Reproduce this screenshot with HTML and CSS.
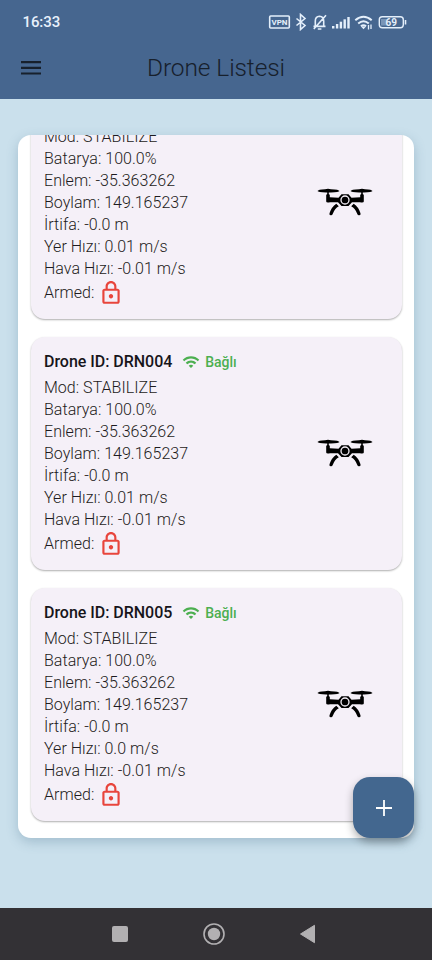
FILE: index.html
```html
<!DOCTYPE html>
<html lang="tr">
<head>
<meta charset="utf-8">
<meta name="viewport" content="width=device-width">
<title>Drone Listesi</title>
<link rel="stylesheet" href="styles.css">
</head>
<body>
<svg width="0" height="0" class="defs">
  <symbol id="lock" viewBox="0 0 24 24"><path d="M18 8h-1V6c0-2.760-2.240-5-5-5S7 3.240 7 6v2H6c-1.100 0-2 .9-2 2v10c0 1.100.9 2 2 2h12c1.100 0 2-.9 2-2V10c0-1.100-.9-2-2-2zM9 6c0-1.660 1.340-3 3-3s3 1.340 3 3v2H9V6zm9 14H6V10h12v10zm-6-3c1.100 0 2-.9 2-2s-.9-2-2-2-2 .9-2 2 .9 2 2 2z"/></symbol>
  <symbol id="wifi" viewBox="0 0 24 24"><path d="M1 9l2 2c4.970-4.970 13.030-4.970 18 0l2-2C16.930 2.930 7.080 2.930 1 9zm8 8l3 3 3-3c-1.650-1.660-4.340-1.660-6 0zm-4-4l2 2c2.760-2.760 7.240-2.760 10 0l2-2C15.140 9.140 8.870 9.140 5 13z"/></symbol>
  <symbol id="drone" viewBox="0 0 56 28">
    <path d="M0.500 3Q1 1.500 8 1.200L11 .8 14 1.200Q22 1.500 22.500 3Q22 4.400 14 4.400H9Q1 4.400.500 3zM33.500 3Q34 1.500 42 1.200L45 .8 48 1.200Q55 1.500 55.500 3Q55 4.400 47 4.400H42Q34 4.400 33.500 3z"/>
    <path d="M9.200 6.800Q11 5.300 12.800 6.800V9.200L21.500 9.700 24.500 6.200H31.500L34.500 9.700 43.200 9.200V6.800Q45 5.300 46.800 6.800V13.500Q46.800 14.800 43 14.200L35 14.200 31.500 18H24.500L21 14.200 13 14.200Q9.200 14.800 9.200 13.500z"/>
    <path d="M10.200 3h1.600v5h-1.600zM44.200 3h1.600v5h-1.600z"/>
    <circle cx="28" cy="12" r="4" fill="none" stroke="#f5f0f8" stroke-width="1.300"/>
    <path d="M19.300 15.800L21.800 18.300Q17.700 20.500 15.700 26Q15.200 27.600 13.600 27.300Q12 27 12.500 25.200Q14.500 19 19.300 15.800zM36.700 15.800L34.200 18.300Q38.300 20.500 40.300 26Q40.800 27.600 42.400 27.300Q44 27 43.500 25.200Q41.500 19 36.700 15.800z"/>
  </symbol>
</svg>
<div class="screen">
  <header class="header">
    <div class="status">
      <span class="time">16:33</span>
      <svg class="status-icons" width="140" height="18" viewBox="0 0 140 18" fill="none" stroke="#e4effb" stroke-width="1.600">
        <rect x="1.700" y="3" width="19.600" height="12" rx="1"/>
        <text x="11.500" y="12" class="vpn">VPN</text>
        <path d="M28.500 5.500l8.500 7-4.500 4v-15l4.500 4-8.500 7"/>
        <path d="M45.500 13.400h12M47.300 12.500V8q0-4.300 4.200-4.700 4.200.4 4.200 4.700v5M45.800 16L58 2.300M49.800 16h3.600"/>
        <g fill="#e4effb" stroke="none"><rect x="64" y="13" width="2.400" height="2.500"/><rect x="67.900" y="11" width="2.400" height="4.500"/><rect x="71.700" y="8.700" width="2.400" height="6.800"/><rect x="75.500" y="6.300" width="2.400" height="9.200"/><rect x="79.300" y="4" width="2.400" height="11.500"/></g>
        <path stroke-width="2" d="M87.300 7.300q8.200-7 16.400 0M90.200 10.500q5.300-4.500 10.600 0M92.900 13.300q2.600-2 5.200 0"/>
        <path fill="#e4effb" stroke="none" d="M93 13.500h5L95.500 16.200z"/>
        <path stroke-width="1.300" d="M100.500 12v4.500M103 11.500v4.500"/>
        <rect x="113" y="6" width="6" height="6.500" fill="#7995b7" stroke="none"/>
        <rect x="111.300" y="3.700" width="24" height="11" rx="3" stroke-width="1.400"/>
        <path d="M137.500 7v4.500" stroke-width="1.600"/>
        <text x="123.300" y="12.800" class="level">69</text>
      </svg>
    </div>
    <div class="appbar">
      <svg class="menu" width="20" height="14" viewBox="0 0 20 14" fill="#17202c"><path d="M0 0h20v2.200H0zM0 5.700h20v2.200H0zM0 11.400h20v2.200H0z"/></svg>
      <h1>Drone Listesi</h1>
    </div>
  </header>
  <main class="content">
    <section class="panel">
      <article class="card">
        <div class="info">
          <p>Mod: STABILIZE</p><p>Batarya: 100.0%</p><p>Enlem: -35.363262</p><p>Boylam: 149.165237</p><p>İrtifa: -0.0 m</p><p>Yer Hızı: 0.01 m/s</p><p>Hava Hızı: -0.01 m/s</p>
          <p class="armed">Armed: <svg class="lock"><use href="#lock"/></svg></p>
        </div>
        <svg class="drone"><use href="#drone"/></svg>
      </article>
      <article class="card">
        <div class="info">
          <h2>Drone ID: DRN004 <svg class="wifi"><use href="#wifi"/></svg><span class="state">Bağlı</span></h2>
          <p>Mod: STABILIZE</p><p>Batarya: 100.0%</p><p>Enlem: -35.363262</p><p>Boylam: 149.165237</p><p>İrtifa: -0.0 m</p><p>Yer Hızı: 0.01 m/s</p><p>Hava Hızı: -0.01 m/s</p>
          <p class="armed">Armed: <svg class="lock"><use href="#lock"/></svg></p>
        </div>
        <svg class="drone"><use href="#drone"/></svg>
      </article>
      <article class="card">
        <div class="info">
          <h2>Drone ID: DRN005 <svg class="wifi"><use href="#wifi"/></svg><span class="state">Bağlı</span></h2>
          <p>Mod: STABILIZE</p><p>Batarya: 100.0%</p><p>Enlem: -35.363262</p><p>Boylam: 149.165237</p><p>İrtifa: -0.0 m</p><p>Yer Hızı: 0.0 m/s</p><p>Hava Hızı: -0.01 m/s</p>
          <p class="armed">Armed: <svg class="lock"><use href="#lock"/></svg></p>
        </div>
        <svg class="drone"><use href="#drone"/></svg>
      </article>
    </section>
    <button class="fab" aria-label="Ekle"><svg width="16" height="16" viewBox="0 0 16 16" fill="#fff"><path d="M7.100 0h1.800v7.100H16v1.800H8.900V16H7.100V8.900H0V7.100h7.100z"/></svg></button>
  </main>
  <nav class="navbar">
    <svg width="432" height="52" viewBox="0 0 432 52" fill="#b2b0b2"><rect x="112" y="18" width="16" height="16" rx="2"/><circle cx="214" cy="26" r="6.200"/><circle cx="214" cy="26" r="10" fill="none" stroke="#b2b0b2" stroke-width="1.600"/><path d="M300.500 26L314.500 17.300V34.700z" stroke="#b2b0b2" stroke-linejoin="round"/></svg>
  </nav>
</div>
</body>
</html>
```

FILE: styles.css
```css
* { box-sizing: border-box; }
body { margin: 0; font-family: Roboto, sans-serif; }
.defs { position: absolute; }
.screen { width: 432px; height: 960px; display: flex; flex-direction: column; overflow: hidden; background: #cae0ec; }
.header { height: 99px; background: #46668f; flex: none; }
.status { height: 43px; display: flex; justify-content: space-between; padding: 0 24px 0 22.500px; align-items: center; }
.time { color: #e8f1fc; font-size: 15px; font-weight: 500; letter-spacing: -.1px; }
.vpn, .level { fill: #e4effb; stroke: none; font-weight: 700; text-anchor: middle; }
.vpn { font-size: 8px; }
.level { font-size: 10px; }
.appbar { height: 50px; display: grid; grid-template-columns: 126px 1fr; align-items: center; padding-left: 21px; }
h1 { margin: 0; font-size: 24.500px; font-weight: 300; line-height: 30px; color: #17202c; letter-spacing: -.1px; white-space: nowrap; }
.content { flex: 1; padding: 36px 18px 70px; position: relative; min-height: 0; }
.panel { height: 703px; padding: 0 12.500px 17px; border-radius: 13px; background: #fff; overflow: hidden; display: flex; flex-direction: column; justify-content: flex-end; gap: 17.300px; box-shadow: 0 4px 12px rgba(60, 100, 130, .28); }
.card { flex: none; height: 233.500px; border-radius: 14px; background: #f5f0f8; padding: 13px 28.500px 13.500px 13.500px; display: flex; align-items: center; justify-content: space-between; box-shadow: 0 1px 2px rgba(0, 0, 0, .32); }
.info { align-self: flex-end; }
h2, p { margin: 0; display: flex; align-items: center; white-space: nowrap; }
h2 { height: 23px; margin-bottom: 3.500px; font-size: 16px; font-weight: 500; letter-spacing: -.03px; color: #17151a; }
p { height: 22px; font-size: 16px; font-weight: 300; letter-spacing: .03px; color: #1d1b20; }
.armed { height: 26px; }
.wifi { width: 18px; height: 18px; margin-left: 10px; fill: #4caf50; }
.state { margin-left: 5px; font-size: 14px; color: #4caf50; }
.lock { width: 26px; height: 26px; margin-left: 4px; fill: #e8453c; }
.drone { width: 56px; height: 28px; fill: #000; }
.fab { position: absolute; right: 18px; bottom: 70px; width: 61px; height: 61px; border: 0; border-radius: 17px; padding: 0; background: #43678f; display: flex; align-items: center; justify-content: center; box-shadow: 0 4px 8px rgba(0, 0, 0, .32); }
.navbar { flex: none; height: 52px; background: #333135; }
.navbar svg { display: block; }
```
